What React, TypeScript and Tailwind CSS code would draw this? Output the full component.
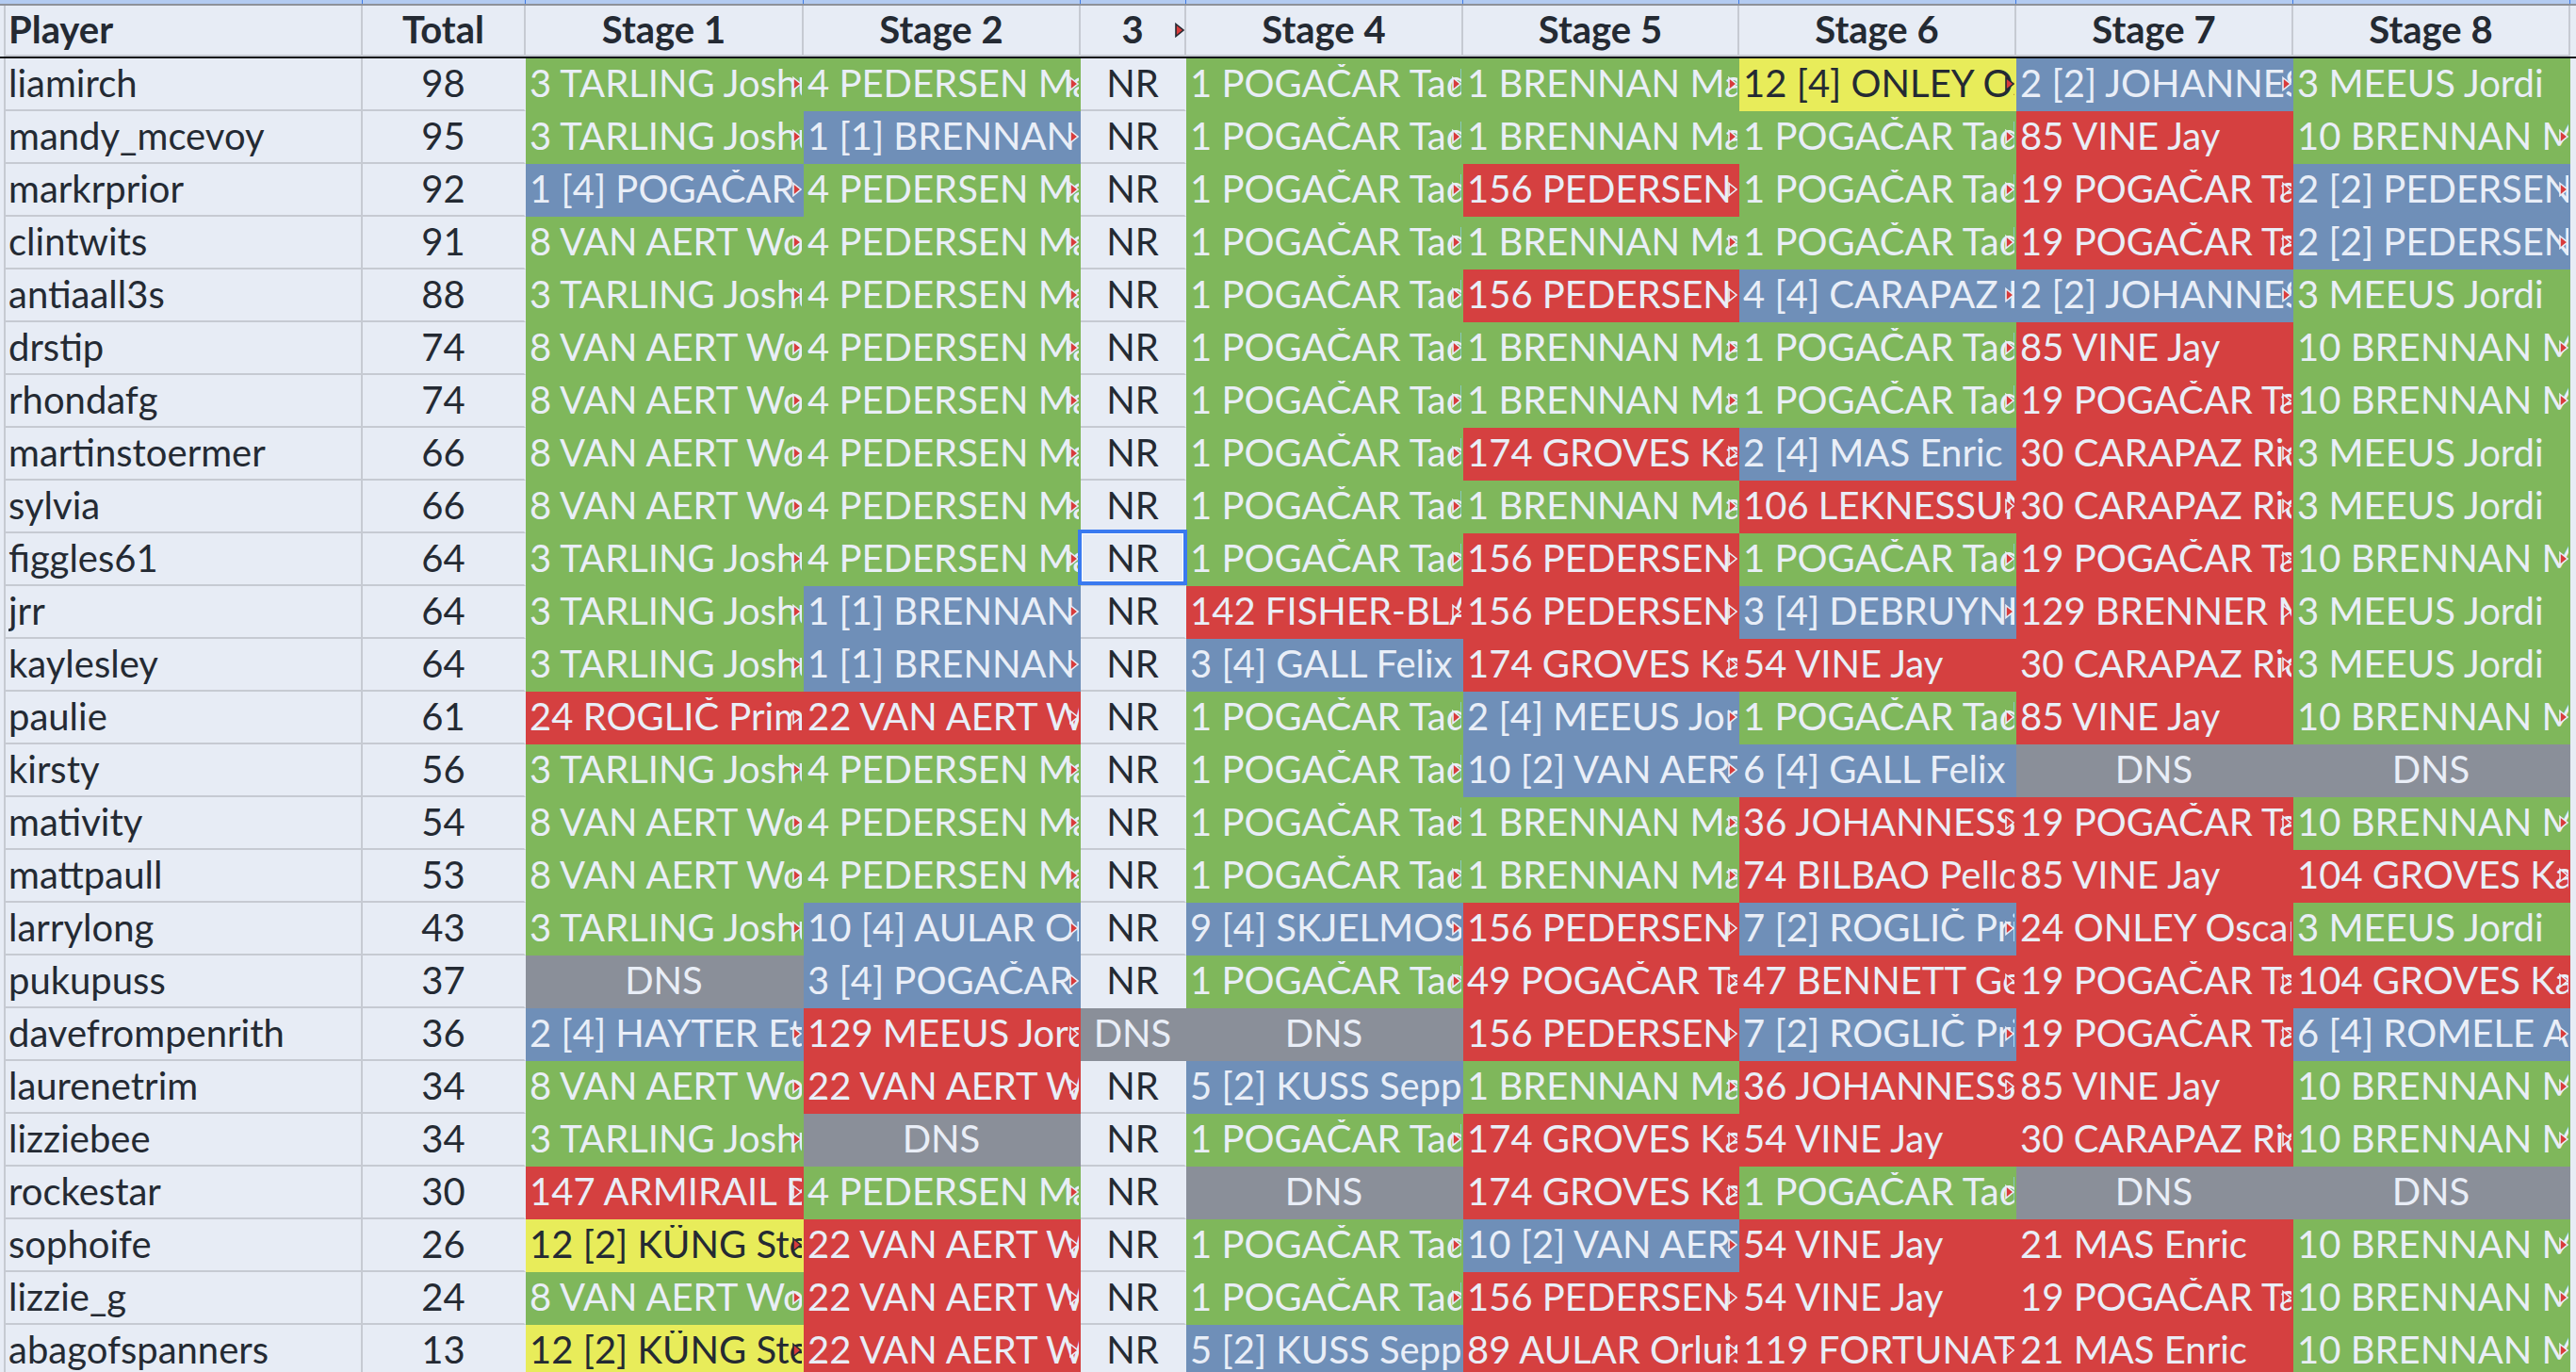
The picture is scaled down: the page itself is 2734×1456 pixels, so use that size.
import React from 'react';

const COLS = ['w-[381px]', 'w-[173px]', 'w-[295px]', 'w-[294px]', 'w-[112px]', 'w-[294px]', 'w-[293px]', 'w-[294px]', 'w-[294px]', 'w-[294px]'];

const FILL: Record<string, string> = {
  g: 'bg-[#7fb75b] text-[#e9eef7]',
  b: 'bg-[#6f8fb8] text-[#e9eef7]',
  r: 'bg-[#d54040] text-[#e9eef7]',
  y: 'bg-[#e8ec5a] text-[#242a33]',
  x: 'bg-[#8a8f99] text-[#e9eef7]',
  n: 'bg-[#e7ecf5] text-[#242a33]',
};

const FITS = new Set([
  '3 MEEUS Jordi', '85 VINE Jay', '54 VINE Jay', '21 MAS Enric', '24 ONLEY Oscar', '74 BILBAO Pello',
  '3 [4] GALL Felix', '6 [4] GALL Felix', '5 [2] KUSS Sepp', '2 [4] MAS Enric', 'DNS', 'NR',
]);

const TAR = 'g|3 TARLING Joshua';
const PED = 'g|4 PEDERSEN Mads';
const POG = 'g|1 POGAČAR Tadej';
const BREN = 'g|1 BRENNAN Matthew';
const VAE = 'g|8 VAN AERT Wout';
const MEE = 'g|3 MEEUS Jordi';
const BREN10 = 'g|10 BRENNAN Matthew';
const NR = 'n|NR';
const DNS = 'x|DNS';
const BB = 'b|1 [1] BRENNAN Matthew';
const JOH = 'b|2 [2] JOHANNESSEN Tobias Halland';
const VINE85 = 'r|85 VINE Jay';
const VINE54 = 'r|54 VINE Jay';
const PED156 = 'r|156 PEDERSEN Mads';
const POG19 = 'r|19 POGAČAR Tadej';
const PED2 = 'b|2 [2] PEDERSEN Mads';
const GRO174 = 'r|174 GROVES Kaden';
const CAR30 = 'r|30 CARAPAZ Richard';
const VAE22 = 'r|22 VAN AERT Wout';
const VAE10 = 'b|10 [2] VAN AERT Wout';
const JOH36 = 'r|36 JOHANNESSEN Tobias Halland';
const GRO104 = 'r|104 GROVES Kaden';
const ROG7 = 'b|7 [2] ROGLIČ Primož';
const KUNG = 'y|12 [2] KÜNG Stefan';
const KUSS = 'b|5 [2] KUSS Sepp';
const MAS21 = 'r|21 MAS Enric';

type Row = [string, number, ...string[]];

const ROWS: Row[] = [
  ['liamirch', 98, TAR, PED, NR, POG, BREN, 'y|12 [4] ONLEY Oscar', JOH, MEE],
  ['mandy_mcevoy', 95, TAR, BB, NR, POG, BREN, POG, VINE85, BREN10],
  ['markrprior', 92, 'b|1 [4] POGAČAR Tadej', PED, NR, POG, PED156, POG, POG19, PED2],
  ['clintwits', 91, VAE, PED, NR, POG, BREN, POG, POG19, PED2],
  ['antiaall3s', 88, TAR, PED, NR, POG, PED156, 'b|4 [4] CARAPAZ Richard', JOH, MEE],
  ['drstip', 74, VAE, PED, NR, POG, BREN, POG, VINE85, BREN10],
  ['rhondafg', 74, VAE, PED, NR, POG, BREN, POG, POG19, BREN10],
  ['martinstoermer', 66, VAE, PED, NR, POG, GRO174, 'b|2 [4] MAS Enric', CAR30, MEE],
  ['sylvia', 66, VAE, PED, NR, POG, BREN, 'r|106 LEKNESSUND Andreas', CAR30, MEE],
  ['figgles61', 64, TAR, PED, NR, POG, PED156, POG, POG19, BREN10],
  ['jrr', 64, TAR, BB, NR, 'r|142 FISHER-BLACK Finn', PED156, 'b|3 [4] DEBRUYNE Ramses', 'r|129 BRENNER Marco', MEE],
  ['kaylesley', 64, TAR, BB, NR, 'b|3 [4] GALL Felix', GRO174, VINE54, CAR30, MEE],
  ['paulie', 61, 'r|24 ROGLIČ Primož', VAE22, NR, POG, 'b|2 [4] MEEUS Jordi', POG, VINE85, BREN10],
  ['kirsty', 56, TAR, PED, NR, POG, VAE10, 'b|6 [4] GALL Felix', DNS, DNS],
  ['mativity', 54, VAE, PED, NR, POG, BREN, JOH36, POG19, BREN10],
  ['mattpaull', 53, VAE, PED, NR, POG, BREN, 'r|74 BILBAO Pello', VINE85, GRO104],
  ['larrylong', 43, TAR, 'b|10 [4] AULAR Orluis', NR, 'b|9 [4] SKJELMOSE Mattias', PED156, ROG7, 'r|24 ONLEY Oscar', MEE],
  ['pukupuss', 37, DNS, 'b|3 [4] POGAČAR Tadej', NR, POG, 'r|49 POGAČAR Tadej', 'r|47 BENNETT George', POG19, GRO104],
  ['davefrompenrith', 36, 'b|2 [4] HAYTER Ethan', 'r|129 MEEUS Jordi', DNS, DNS, PED156, ROG7, POG19, 'b|6 [4] ROMELE Alessandro'],
  ['laurenetrim', 34, VAE, VAE22, NR, KUSS, BREN, JOH36, VINE85, BREN10],
  ['lizziebee', 34, TAR, DNS, NR, POG, GRO174, VINE54, CAR30, BREN10],
  ['rockestar', 30, 'r|147 ARMIRAIL Bruno', PED, NR, DNS, GRO174, POG, DNS, DNS],
  ['sophoife', 26, KUNG, VAE22, NR, POG, VAE10, VINE54, MAS21, BREN10],
  ['lizzie_g', 24, VAE, VAE22, NR, POG, PED156, VINE54, POG19, BREN10],
  ['abagofspanners', 13, KUNG, VAE22, NR, KUSS, 'r|89 AULAR Orluis', 'r|119 FORTUNATO Lorenzo', MAS21, BREN10],
];

const HEADERS = ['Player', 'Total', 'Stage 1', 'Stage 2', '3', 'Stage 4', 'Stage 5', 'Stage 6', 'Stage 7', 'Stage 8'];

function Marker() {
  return (
    <svg className="absolute right-0 top-1/2 -translate-y-1/2 z-[1]" width="10" height="16" viewBox="0 0 10 16">
      <polygon points="1,1.5 9,8 1,14.5" fill="#d83b3b" stroke="currentColor" strokeWidth="1.6" strokeLinejoin="miter" />
    </svg>
  );
}

function kindOf(v: string | number): string {
  if (typeof v === 'number') return 'n';
  const i = v.indexOf('|');
  return i === -1 ? 'n' : v.slice(0, i);
}

function textOf(v: string | number): string {
  if (typeof v === 'number') return String(v);
  const i = v.indexOf('|');
  return i === -1 ? v : v.slice(i + 1);
}

function BodyCell({ row, col, r }: { row: Row; col: number; r: number }) {
  const v = row[col];
  const kind = col < 2 ? 'n' : kindOf(v);
  const text = col === 0 ? (v as string) : textOf(v);
  const plain = kind === 'n';
  const next = ROWS[r]?.[col + 1];
  const rightPlain = col + 1 < 2 || (next !== undefined && kindOf(next) === 'n');
  const below = ROWS[r + 1]?.[col];
  const belowPlain = col < 2 || (below === undefined ? true : kindOf(below) === 'n');
  const borders = plain
    ? `${rightPlain ? 'border-r-[#c6cad2]' : 'border-r-transparent'} ${belowPlain ? 'border-b-[#c6cad2]' : 'border-b-transparent'}`
    : 'border-r-transparent border-b-transparent';
  const centered = col === 1 || text === 'NR' || text === 'DNS';
  const truncated = col >= 2 && !FITS.has(text);
  const selected = r === 9 && col === 4;
  return (
    <div
      className={`relative h-[56px] shrink-0 border-r-2 border-b-2 ${borders} ${FILL[kind]} ${COLS[col]} ${
        col === 0 ? 'border-l-2 border-l-[#c6cad2] pl-[3px]' : ''
      } ${centered ? 'justify-center' : col === 0 ? '' : 'pl-[4px]'} flex items-center`}
    >
      <div className="overflow-hidden whitespace-nowrap w-full flex items-center" style={{ justifyContent: centered ? 'center' : 'flex-start' }}>
        <span className="leading-none pb-[2px]">{text}</span>
      </div>
      {truncated && <Marker />}
      {selected && (
        <div className="absolute -left-[3px] -right-[3px] -top-[4px] -bottom-[1px] border-4 border-[#3a7af0] z-10">
          <div className="w-full h-full border border-white" />
        </div>
      )}
    </div>
  );
}

export default function App() {
  return (
    <div className="w-[2734px] h-[1456px] overflow-hidden bg-[#e7ecf5] text-[#242a33] text-[40px] font-['Lato','Noto_Sans',sans-serif]">
      <div className="flex h-[4px] bg-[#b3cbf1] pl-[4px]">
        {COLS.map((c, i) => (
          <div key={i} className={`${c} h-full border-r border-[#3f7be4] shrink-0`} />
        ))}
      </div>
      <div className="h-[2px] bg-[#8e9199]" />
      <div className="flex pl-[4px]">
        {HEADERS.map((h, i) => (
          <div
            key={i}
            className={`relative h-[54px] shrink-0 border-r-2 border-b-2 border-[#c6cad2] ${COLS[i]} ${
              i === 0 ? 'border-l-2 pl-[3px] justify-start' : 'justify-center'
            } flex items-center font-bold`}
          >
            <span className="leading-none pb-[2px]">{h}</span>
            {i === 4 && <Marker />}
          </div>
        ))}
      </div>
      <div className="h-[2px] bg-[#111318]" />
      <div className="flex flex-col">
        {ROWS.map((row, r) => (
          <div key={r} className="flex pl-[4px]">
            {COLS.map((_, c) => (
              <BodyCell key={c} row={row} col={c} r={r} />
            ))}
          </div>
        ))}
      </div>
    </div>
  );
}
